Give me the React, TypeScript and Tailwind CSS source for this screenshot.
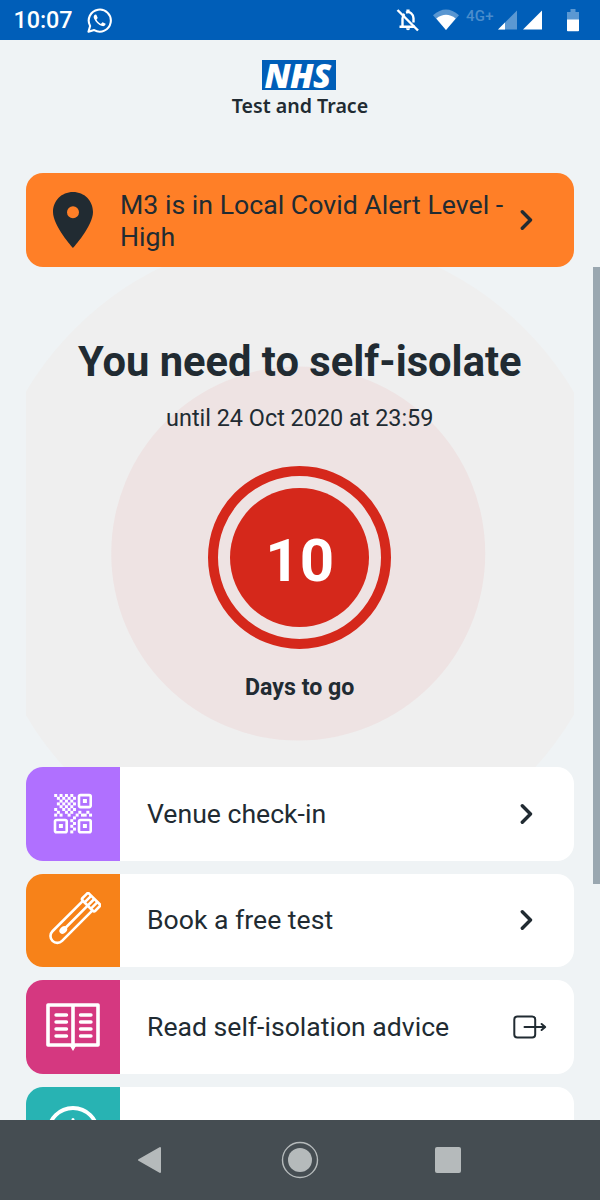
import type { ReactNode } from "react";

const Chevron = () => (
    <svg viewBox="0 0 14 22" className="w-[14px] h-[22px] shrink-0" fill="none" stroke="currentColor" strokeWidth="3.4" strokeLinecap="round" strokeLinejoin="round">
        <path d="M2.3 2.7L10.5 11L2.3 19.3" />
    </svg>
);

const ExternalIcon = () => (
    <svg viewBox="0 0 34 24" className="w-[34px] h-6 shrink-0" fill="none" stroke="currentColor" strokeWidth="2" strokeLinecap="round" strokeLinejoin="round">
        <rect x="1.3" y="1.5" width="20.9" height="21" rx="3" />
        <path d="M11.5 12H32M28.6 9L32.2 12L28.6 15" />
    </svg>
);

// 1 = filled module, the three finder squares are drawn separately
const qrRows = [
    "10101010000000",
    "01010101000000",
    "00101010000000",
    "01010101000000",
    "00101010000000",
    "10010101000000",
    "01001010010010",
    "10100100101101",
    "00000001000000",
    "00000010000000",
    "00000001000000",
    "00000010000000",
    "00000001000000",
    "00000010000000",
];

const QrIcon = () => (
    <svg viewBox="0 0 40 42" className="w-10 h-[42px]" fill="#fff">
        {qrRows.map((row, y) =>
            row.split("").map((cell, x) =>
                cell === "1" ? <rect key={`${x}-${y}`} x={1.2 + x * 2.68} y={1 + y * 2.8} width="3" height="3" /> : null
            )
        )}
        <g fill="none" stroke="#fff" strokeWidth="2.6">
            <rect x="26" y="2.1" width="11.7" height="12" rx="1.5" />
            <rect x="2" y="27" width="11.7" height="12.3" rx="1.5" />
            <rect x="26" y="27" width="11.7" height="12.3" rx="1.5" />
        </g>
        <path d="M29.9 6.1h4v4h-4zM5.9 31.1h4v4h-4zM29.9 31.1h4v4h-4z" />
    </svg>
);

const TubeIcon = () => (
    <svg viewBox="0 0 56 56" className="w-14 h-14" fill="none" stroke="#fff" strokeWidth="2.6" strokeLinecap="round" strokeLinejoin="round">
        <g transform="translate(44.8 11.5) rotate(45)">
            <rect x="-9" y="-6.5" width="18" height="9.5" rx="1.8" />
            <path d="M-4.5 -6V2.5M0 -6V2.5M4.5 -6V2.5" />
            <path d="M-6.8 3V46a6.8 6.8 0 0 0 13.6 0V3" />
            <path d="M0 3V36" />
            <ellipse cx="0" cy="37.5" rx="2" ry="3" fill="#fff" />
        </g>
    </svg>
);

const BookIcon = () => (
    <svg viewBox="0 0 54 48" className="w-[54px] h-12" fill="none" stroke="#fff" strokeWidth="3.6" strokeLinejoin="round">
        <path d="M2 2H52V42H2ZM27 2V42" />
        <path d="M24 43L27 48L30 43Z" fill="#fff" stroke="none" />
        <path d="M10 12H20.5M10 19H20.5M10 26H20.5M10 33H20.5M34.5 12H45M34.5 19H45M34.5 26H45M34.5 33H45" strokeWidth="3.4" strokeLinecap="round" />
    </svg>
);

const InfoIcon = () => (
    <svg viewBox="0 0 54 56" className="w-[54px] h-14" fill="none" stroke="#fff" strokeWidth="3.8">
        <circle cx="27" cy="27.5" r="24.5" />
        <path d="M27 14.5V38" strokeWidth="3" strokeLinecap="round" />
    </svg>
);

const StatusBar = () => (
    <header className="h-10 shrink-0 bg-[#005eb8] text-white flex items-center">
        <span className="ml-[13.5px] w-[60px] pt-0.5 text-[23.4px] leading-none tracking-[-0.1px] font-medium">10:07</span>
        <svg viewBox="0 0 24 24" className="ml-[13px] w-[25px] h-[25px]" fill="none" stroke="#fff" strokeWidth="2">
            <path d="M1.4 22.8L3 17.2A10.6 10.6 0 1 1 6.9 21.2Z" strokeLinejoin="round" />
            <path d="M7.7 6.2c-1.5 1-1.5 2.7-.8 4.2 1.5 3.3 4.2 5.9 7.6 7 1.7.5 3.2-.4 3.4-2.2l-3-1.5-1.6 1.6c-2-.9-3.3-2.2-4.2-4.2l1.2-1.6-1.3-3z" fill="#fff" stroke="none" />
        </svg>
        <div className="ml-auto mr-5 flex items-center">
            <svg viewBox="0 0 24 24" className="w-6 h-6" fill="none" stroke="#fff" strokeWidth="2.4">
                <path d="M3.5 18.7H19M6.5 18V10.5c0-2 .8-3.5 2-4.5M10 4.6c4-1.6 7.5 1.6 7.5 5.7V14.5" />
                <path d="M12 1.5V4.5" strokeWidth="3.2" />
                <path d="M10 20.3h4a2 2 0 0 1-4 0z" fill="#fff" stroke="none" />
                <path d="M1.5 2L22 22.5" />
            </svg>
            <svg viewBox="0 0 26 22" className="ml-[13px] w-[26px] h-[22px]">
                <path d="M0 6.2Q13-5 26 6.2L13 21Z" fill="#fff" opacity=".35" />
                <path d="M3.3 9.5Q13 2 22.7 9.5L13 21Z" fill="#fff" />
            </svg>
            <span className="-mt-2 ml-[7px] w-[29px] text-[15px] leading-none tracking-[0.2px] font-medium text-[#4a8dcc]">4G+</span>
            <svg viewBox="0 0 46 20" className="ml-[3px] w-[46px] h-5">
                <path d="M0 19.5L19 .5V19.5Z" fill="#5b98d2" />
                <path d="M0 19.5L7 12.5V19.5ZM25 19.5L44 .5V19.5Z" fill="#fff" />
            </svg>
            <svg viewBox="0 0 14 23" className="ml-[22px] w-[14px] h-[23px]">
                <path d="M1 3h3.5V0h5V3H13v8H1Z" fill="#5b98d2" />
                <path d="M1 10.5H13V21.5a.8.8 0 0 1-.8.8H1.8a.8.8 0 0 1-.8-.8Z" fill="#fff" />
            </svg>
        </div>
    </header>
);

interface MenuRowProps {
    label: string;
    color: string;
    icon: ReactNode;
    external?: boolean;
}

const MenuRow = ({ label, color, icon, external }: MenuRowProps) => (
    <button className="h-[93.5px] shrink-0 w-full bg-white rounded-[17px] overflow-hidden flex items-center text-left">
        <span className={`w-[94px] h-full shrink-0 flex items-center justify-center ${color}`}>{icon}</span>
        <span className="ml-[27px] flex-1 text-[26.6px] leading-8 whitespace-nowrap">{label}</span>
        {label && (
            <span className={external ? "mr-[27px]" : "mr-10"}>{external ? <ExternalIcon /> : <Chevron />}</span>
        )}
    </button>
);

export default function App() {
    return (
        <div className="w-[600px] h-[1200px] bg-[#eff3f5] text-[#212b32] font-[Roboto,sans-serif] flex flex-col overflow-hidden">
            <StatusBar />

            <div className="h-[133px] shrink-0 flex flex-col items-center pt-5">
                <div className="mr-[3px] flex h-[30px] w-[74px] items-center justify-center bg-[#005eb8]">
                    <span className="mr-0.5 font-['Open_Sans',sans-serif] text-[33px] leading-none font-extrabold italic tracking-[-0.6px] text-white">NHS</span>
                </div>
                <p className="mt-[2px] text-[19.6px] leading-7 font-semibold font-['Noto_Sans',sans-serif] whitespace-nowrap">Test and Trace</p>
            </div>

            <main className="flex-1 min-h-0 flex">
                <div className="ml-[26px] w-[547.5px] shrink-0 flex flex-col overflow-hidden">
                    {/* Alert banner */}
                    <button className="h-[94px] shrink-0 bg-[#ff7f27] rounded-[17px] flex items-center text-left">
                        <svg viewBox="0 0 40 56" className="ml-[27px] w-10 h-14 shrink-0" fill="#212b32">
                            <path fillRule="evenodd" d="M20 0C8.5 0 0 8.8 0 20C0 34 20 56 20 56S40 34 40 20C40 8.8 31.5 0 20 0ZM20 14.2a6 6 0 1 1 0 12a6 6 0 0 1 0-12Z" />
                        </svg>
                        <span className="ml-[27px] pt-px flex-1 text-[26.7px] leading-8 whitespace-nowrap">
                            M3 is in Local Covid Alert Level -<br />High
                        </span>
                        <span className="mr-10"><Chevron /></span>
                    </button>

                    {/* Countdown */}
                    <section className="relative h-[500px] shrink-0 overflow-hidden flex flex-col items-center">
                        <svg viewBox="0 0 547 500" className="absolute inset-0 w-full h-full">
                            <circle cx="273.5" cy="286.5" r="318" fill="#efefef" />
                            <circle cx="272" cy="286.5" r="187" fill="#eee3e3" />
                        </svg>
                        <h1 className="relative mt-[70px] text-[41.7px] leading-[50px] font-bold whitespace-nowrap">You need to self-isolate</h1>
                        <p className="relative mt-[15px] text-[23.4px] leading-8 whitespace-nowrap">until 24 Oct 2020 at 23:59</p>
                        <div className="relative mt-[32px] w-[183px] h-[183px] rounded-full border-[10px] border-[#d5281b] flex items-center justify-center shrink-0">
                            <div className="w-[139px] h-[139px] rounded-full bg-[#d5281b] text-white flex items-center justify-center text-[60px] leading-none font-bold shrink-0">
                                <span className="mt-1.5">10</span>
                            </div>
                        </div>
                        <p className="relative mt-[22px] text-[23.2px] leading-8 font-bold">Days to go</p>
                    </section>

                    <nav className="flex flex-col gap-[13px]">
                        <MenuRow label="Venue check-in" color="bg-[#b070ff]" icon={<QrIcon />} />
                        <MenuRow label="Book a free test" color="bg-[#f78219]" icon={<TubeIcon />} />
                        <MenuRow label="Read self-isolation advice" color="bg-[#d53880]" icon={<BookIcon />} external />
                        <MenuRow label="" color="bg-[#28b3b3]" icon={<InfoIcon />} />
                    </nav>
                </div>
                <div className="ml-auto mt-[94px] w-[7px] h-[617px] bg-[#9aa7b0]" />
            </main>

            <footer className="h-20 shrink-0 bg-[#454d52] text-[#b5babb] flex items-center">
                <svg viewBox="0 0 24 28" className="ml-[137px] w-6 h-7" fill="currentColor" stroke="currentColor" strokeWidth="2" strokeLinejoin="round">
                    <path d="M2 14L23 2V26Z" />
                </svg>
                <svg viewBox="0 0 38 38" className="ml-[120px] w-[38px] h-[38px]">
                    <circle cx="19" cy="19" r="17.5" fill="none" stroke="currentColor" strokeWidth="1.4" />
                    <circle cx="19" cy="19" r="12" fill="currentColor" />
                </svg>
                <div className="ml-[116px] w-[26px] h-[26px] rounded-[2px] bg-[#b5babb]" />
            </footer>
        </div>
    );
}
